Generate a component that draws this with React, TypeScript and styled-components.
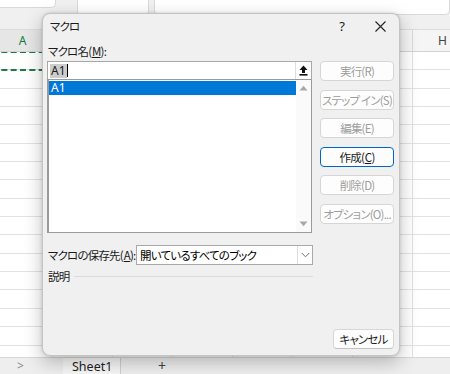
import React from "react";
import styled, { createGlobalStyle } from "styled-components";

const GlobalStyle = createGlobalStyle`
  html, body { margin: 0; padding: 0; }
  body {
    width: 450px; height: 374px; overflow: hidden; background: #ffffff;
    font-family: "Noto Sans", "Noto Sans CJK JP", sans-serif;
  }
`;

const Screen = styled.div`
  position: relative;
  width: 450px;
  height: 374px;
  overflow: hidden;
  display: flex;
  flex-direction: column;
`;

/* ---------- Excel background ---------- */
const TopBar = styled.div`
  height: 29px;
  flex: none;
  background: #f0f0f0;
  display: flex;
  align-items: flex-start;
`;

const TopBox = styled.div<{ $w?: number; $h: number; $ml: number }>`
  flex: ${(p) => (p.$w ? "none" : "1")};
  width: ${(p) => (p.$w ? `${p.$w}px` : "auto")};
  height: ${(p) => p.$h}px;
  margin-left: ${(p) => p.$ml}px;
  background: #ffffff;
  border: 1px solid #d9d9d9;
  border-top: none;
  border-radius: 0 0 5px 5px;
`;

const ColHeader = styled.div`
  height: 23px;
  flex: none;
  display: flex;
  margin-left: -7px;
  background: #f5f5f5;
  border-top: 1px solid #dcdcdc;
  border-bottom: 1px solid #d2d2d2;
  box-sizing: border-box;
`;

const HeaderCell = styled.div<{ $active?: boolean }>`
  flex: none;
  width: 60px;
  box-sizing: border-box;
  border-right: 1px solid #dadada;
  display: flex;
  align-items: center;
  justify-content: center;
  font-size: 12px;
  color: ${(p) => (p.$active ? "#107c41" : "#444444")};
  background: ${(p) => (p.$active ? "#e6e6e6" : "transparent")};
`;

const Grid = styled.div`
  flex: 1;
  overflow: hidden;
  display: flex;
  flex-direction: column;
`;

const Row = styled.div`
  flex: none;
  height: 18.35px;
  display: flex;
  margin-left: -7px;
`;

const Cell = styled.div<{ $copied?: boolean }>`
  position: relative;
  flex: none;
  width: 60px;
  box-sizing: border-box;
  border-right: 1px solid #e2e2e2;
  border-bottom: 1px solid #e2e2e2;
  ${(p) =>
    p.$copied
      ? `&::after {
          content: "";
          position: absolute;
          left: -1px; right: -2px; top: -1px; bottom: -2px;
          border: 2px dashed #1d7a46;
        }`
      : ""}
`;

const TabBar = styled.div`
  height: 17px;
  flex: none;
  background: #eeeeee;
  border-top: 1px solid #d8d8d8;
  box-sizing: border-box;
  display: flex;
  align-items: flex-start;
  color: #333;
`;

const TabNav = styled.div`
  width: 63px;
  padding-left: 17px;
  box-sizing: border-box;
  color: #888;
  font-size: 12px;
  line-height: 16px;
`;

const SheetTab = styled.div`
  width: 58px;
  height: 16px;
  box-sizing: border-box;
  background: #f6f6f6;
  border-right: 1px solid #cfcfcf;
  padding-left: 9px;
  font-size: 12.5px;
  line-height: 17px;
  color: #222;
`;

const AddSheet = styled.div`
  margin-left: 37px;
  font-size: 14px;
  line-height: 16px;
  color: #444;
`;

/* ---------- Dialog ---------- */
const Dialog = styled.div`
  position: absolute;
  left: 42px;
  top: 13px;
  width: 358px;
  height: 343px;
  box-sizing: border-box;
  background: #f0f0f0;
  border: 1px solid #c4c4c4;
  border-radius: 8px;
  box-shadow: 0 6px 18px rgba(0, 0, 0, 0.25), 0 0 3px rgba(0, 0, 0, 0.15);
  display: flex;
  flex-direction: column;
  font-family: "Noto Sans CJK JP", "Noto Sans", sans-serif;
  font-feature-settings: "palt";
  font-size: 11.5px;
  letter-spacing: -0.8px;
  color: #1a1a1a;
`;

const Accel = styled.u`
  padding-left: 0.8px;
`;

const TitleBar = styled.div`
  height: 24px;
  flex: none;
  display: flex;
  align-items: center;
  padding-left: 7px;
`;

const Title = styled.div`
  flex: 1;
`;

const TitleBtn = styled.div`
  width: 38px;
  height: 24px;
  display: flex;
  align-items: center;
  justify-content: center;
  font-family: "Noto Sans", sans-serif;
  font-size: 13px;
  letter-spacing: 0;
  color: #222;
`;

const Body = styled.div`
  flex: 1;
  display: flex;
  flex-direction: column;
  padding: 6px 5px 6px 4px;
`;

const Main = styled.div`
  display: flex;
  gap: 8px;
`;

const LeftCol = styled.div`
  width: 265px;
  display: flex;
  flex-direction: column;
`;

const Label = styled.div`
  height: 14px;
  line-height: 14px;
  padding-left: 1px;
  margin-bottom: 3px;
  white-space: nowrap;
`;

const InputBox = styled.div`
  height: 18px;
  box-sizing: border-box;
  background: #ffffff;
  border: 1px solid #a8a8a8;
  border-bottom: none;
  display: flex;
  align-items: center;
`;

const InputText = styled.div`
  flex: 1;
  display: flex;
  align-items: center;
  padding-left: 2px;
  font-family: "Noto Sans", sans-serif;
  font-size: 12px;
  letter-spacing: 0;
`;

const Selected = styled.span`
  background: #cccccc;
  line-height: 14px;
  padding: 0 1px;
`;

const Caret = styled.span`
  display: inline-block;
  width: 1px;
  height: 13px;
  background: #000;
`;

const CollapseBtn = styled.div`
  width: 16px;
  height: 17px;
  box-sizing: border-box;
  border-left: 1px solid #dedede;
  display: flex;
  align-items: center;
  justify-content: center;
`;

const ListBox = styled.div`
  height: 154px;
  box-sizing: border-box;
  background: #ffffff;
  border: 1px solid #9a9a9a;
  border-left-width: 2px;
  display: flex;
`;

const ListItems = styled.div`
  flex: 1;
  padding-top: 1px;
`;

const ListItem = styled.div<{ $selected?: boolean }>`
  height: 14px;
  line-height: 14px;
  padding-left: 2px;
  font-family: "Noto Sans", sans-serif;
  font-size: 12px;
  letter-spacing: 0;
  background: ${(p) => (p.$selected ? "#0078d7" : "transparent")};
  color: ${(p) => (p.$selected ? "#ffffff" : "#000")};
`;

const ScrollBar = styled.div`
  width: 15px;
  background: #fafafa;
  display: flex;
  flex-direction: column;
  justify-content: space-between;
  align-items: center;
  padding: 5px 0 5px;
`;

const RightCol = styled.div`
  width: 74px;
  padding-top: 17px;
  display: flex;
  flex-direction: column;
  gap: 8.5px;
`;

const Button = styled.div<{ $disabled?: boolean; $primary?: boolean; $w?: number }>`
  height: 20px;
  width: ${(p) => (p.$w ? `${p.$w}px` : "auto")};
  box-sizing: border-box;
  display: flex;
  align-items: center;
  justify-content: center;
  white-space: nowrap;
  background: #fdfdfd;
  border: 1px solid ${(p) => (p.$primary ? "#0067c0" : "#d6d6d6")};
  border-bottom-color: ${(p) => (p.$primary ? "#0067c0" : p.$disabled ? "#d6d6d6" : "#c2c2c2")};
  border-radius: 4px;
  color: ${(p) => (p.$disabled ? "#9e9e9e" : "#1a1a1a")};
`;

const StorageRow = styled.div`
  margin-top: 12px;
  display: flex;
  align-items: center;
`;

const StorageLabel = styled.div`
  width: 88px;
  padding-left: 1px;
  white-space: nowrap;
`;

const Combo = styled.div`
  width: 177px;
  height: 20px;
  box-sizing: border-box;
  background: #fff;
  border: 1px solid #a8a8a8;
  display: flex;
  align-items: center;
`;

const ComboText = styled.div`
  flex: 1;
  padding-left: 3px;
  white-space: nowrap;
  color: #000;
`;

const ComboBtn = styled.div`
  width: 15px;
  height: 18px;
  box-sizing: border-box;
  border-left: 1px solid #dcdcdc;
  display: flex;
  align-items: center;
  justify-content: center;
`;

const DescRow = styled.div`
  width: 265px;
  margin-top: 3px;
  display: flex;
  align-items: center;
  gap: 5px;
  height: 16px;
  padding-left: 1px;
`;

const DescLine = styled.div`
  flex: 1;
  height: 1px;
  background: #dcdcdc;
  margin-top: 1px;
`;

const Footer = styled.div`
  margin-top: auto;
  display: flex;
  justify-content: flex-end;
`;

const cols = ["A", "B", "C", "D", "E", "F", "G", "H"];

export default function App() {
  return (
    <Screen>
      <GlobalStyle />
      <TopBar>
        <TopBox $w={58} $h={7} $ml={-4} />
        <TopBox $w={70} $h={15} $ml={21} />
        <TopBox $h={14} $ml={5} />
      </TopBar>
      <ColHeader>
        {cols.map((c) => (
          <HeaderCell key={c} $active={c === "A"}>
            {c}
          </HeaderCell>
        ))}
      </ColHeader>
      <Grid>
        {Array.from({ length: 17 }).map((_, r) => (
          <Row key={r}>
            {cols.map((c) => (
              <Cell key={c} $copied={r === 0 && c === "A"} />
            ))}
          </Row>
        ))}
      </Grid>
      <TabBar>
        <TabNav>&gt;</TabNav>
        <SheetTab>Sheet1</SheetTab>
        <AddSheet>+</AddSheet>
      </TabBar>

      <Dialog>
        <TitleBar>
          <Title>マクロ</Title>
          <TitleBtn>?</TitleBtn>
          <TitleBtn>
            <svg width="11" height="11" viewBox="0 0 11 11">
              <path d="M0.5 0.5 L10.5 10.5 M10.5 0.5 L0.5 10.5" stroke="#222" strokeWidth="1.1" />
            </svg>
          </TitleBtn>
        </TitleBar>
        <Body>
          <Main>
            <LeftCol>
              <Label>
                マクロ名(<Accel>M</Accel>):
              </Label>
              <InputBox>
                <InputText>
                  <Selected>A1</Selected>
                  <Caret />
                </InputText>
                <CollapseBtn>
                  <svg width="9" height="11" viewBox="0 0 9 11">
                    <path d="M4.5 0.5 L8.5 5 L6 5 L6 8 L3 8 L3 5 L0.5 5 Z" fill="#111" />
                    <rect x="0.5" y="9" width="8" height="1.6" fill="#111" />
                  </svg>
                </CollapseBtn>
              </InputBox>
              <ListBox>
                <ListItems>
                  <ListItem $selected>A1</ListItem>
                </ListItems>
                <ScrollBar>
                  <svg width="9" height="6" viewBox="0 0 9 6">
                    <path d="M0.5 5.5 L4.5 0.8 L8.5 5.5 Z" fill="#a8a8a8" />
                  </svg>
                  <svg width="9" height="6" viewBox="0 0 9 6">
                    <path d="M0.5 0.5 L4.5 5.2 L8.5 0.5 Z" fill="#a8a8a8" />
                  </svg>
                </ScrollBar>
              </ListBox>
            </LeftCol>
            <RightCol>
              <Button $disabled>実行(R)</Button>
              <Button $disabled>ステップ イン(S)</Button>
              <Button $disabled>編集(E)</Button>
              <Button $primary>
                作成(<Accel>C</Accel>)
              </Button>
              <Button $disabled>削除(D)</Button>
              <Button $disabled>オプション(O)...</Button>
            </RightCol>
          </Main>
          <StorageRow>
            <StorageLabel>
              マクロの保存先(<Accel>A</Accel>):
            </StorageLabel>
            <Combo>
              <ComboText>開いているすべてのブック</ComboText>
              <ComboBtn>
                <svg width="9" height="6" viewBox="0 0 9 6">
                  <path d="M0.8 1 L4.5 4.8 L8.2 1" stroke="#777" strokeWidth="1" fill="none" />
                </svg>
              </ComboBtn>
            </Combo>
          </StorageRow>
          <DescRow>
            説明
            <DescLine />
          </DescRow>
          <Footer>
            <Button $w={61}>キャンセル</Button>
          </Footer>
        </Body>
      </Dialog>
    </Screen>
  );
}
